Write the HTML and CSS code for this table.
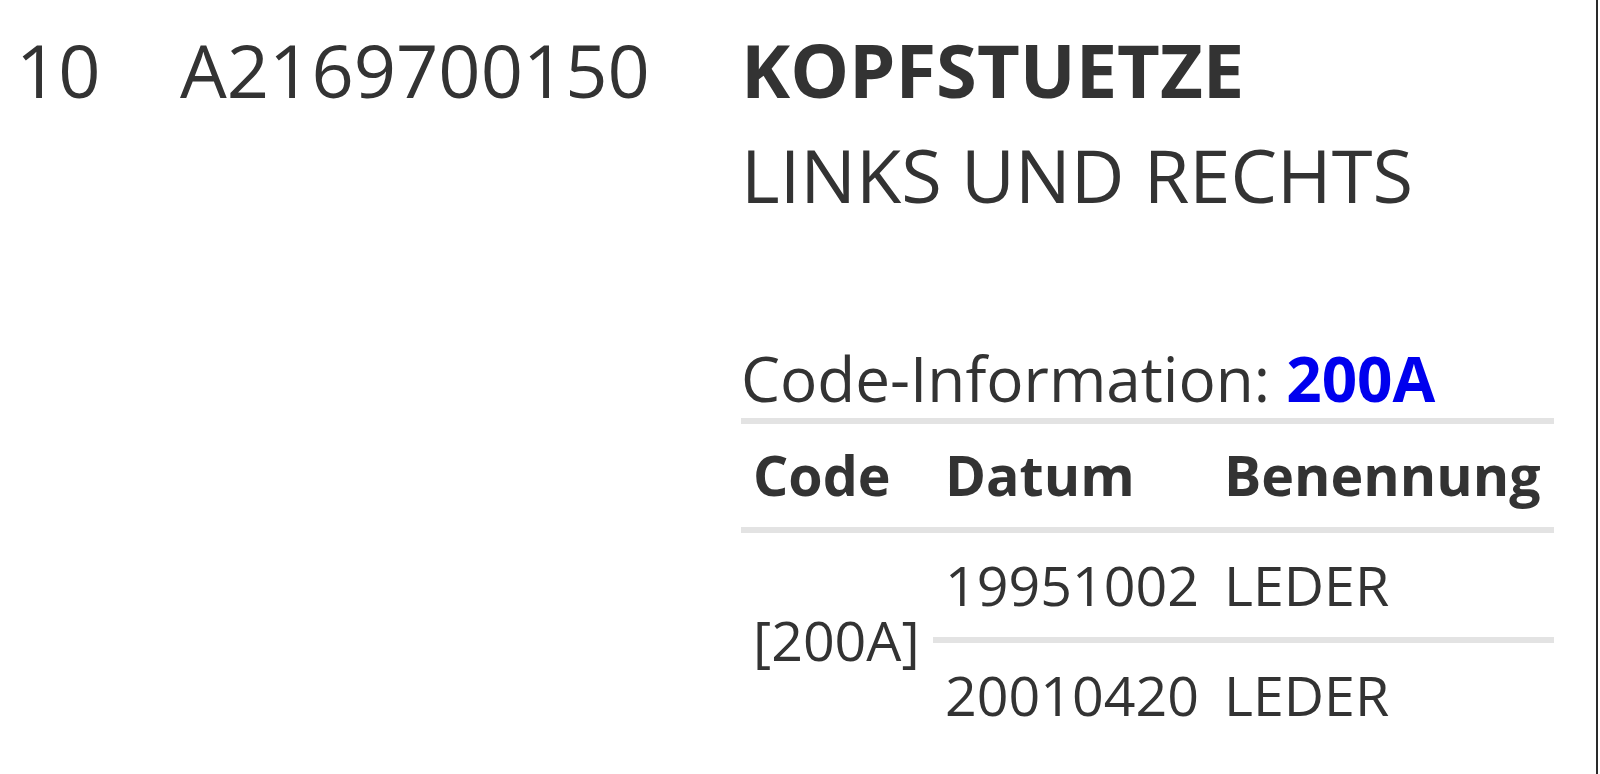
FILE: index.html
```html
<!DOCTYPE html>
<html lang="de">
<head>
<meta charset="utf-8">
<title>Teil</title>
<link rel="stylesheet" href="styles.css">
</head>
<body>
<div class="page">
  <div class="item">
    <div class="pos">10</div>
    <div class="partno">A2169700150</div>
    <div class="desc">
      <div class="name"><b>KOPFSTUETZE</b><br>LINKS UND RECHTS</div>
      <div class="codeinfo">
        <div class="ci-title">Code-Information: <a class="code-link" href="#">200A</a></div>
        <table class="ci-table">
          <colgroup>
            <col class="c-code">
            <col class="c-date">
            <col class="c-name">
          </colgroup>
          <thead>
            <tr><th>Code</th><th>Datum</th><th>Benennung</th></tr>
          </thead>
          <tbody>
            <tr><td rowspan="2" class="code-cell">[200A]</td><td>19951002</td><td>LEDER</td></tr>
            <tr class="sep"><td>20010420</td><td>LEDER</td></tr>
          </tbody>
        </table>
      </div>
    </div>
  </div>
</div>
</body>
</html>
```

FILE: styles.css
```css
html, body {
  margin: 0;
  padding: 0;
  background: #fff;
}
body {
  font-family: "Open Sans", "Noto Sans", sans-serif;
  color: #333;
}
.page {
  box-sizing: border-box;
  width: 1598px;
  height: 774px;
  overflow: hidden;
  border-right: 2px solid #2a2a2a;
}
.item {
  display: grid;
  grid-template-columns: 164px 561px 813px;
  padding: 17px 0 0 16px;
  font-size: 74px;
  line-height: 105px;
}
.name b {
  font-weight: 700;
}
.codeinfo {
  margin-top: 112px;
}
.ci-title {
  font-size: 62px;
  line-height: 79px;
}
.code-link {
  color: #0000ee;
  font-weight: 700;
  text-decoration: none;
}
.ci-table {
  width: 813px;
  table-layout: fixed;
  border-collapse: collapse;
  font-size: 55.5px;
  line-height: 78px;
}
.c-code { width: 192px; }
.c-date { width: 279px; }
.c-name { width: 342px; }
.ci-table th {
  text-align: left;
  font-weight: 700;
  padding: 12px 12px 13px;
  border-top: 6px solid #e3e3e3;
  border-bottom: 6px solid #e3e3e3;
  white-space: nowrap;
}
.ci-table td {
  padding: 13px 12px;
  white-space: nowrap;
  vertical-align: middle;
}
.ci-table .sep td {
  border-top: 6px solid #e3e3e3;
}
```
